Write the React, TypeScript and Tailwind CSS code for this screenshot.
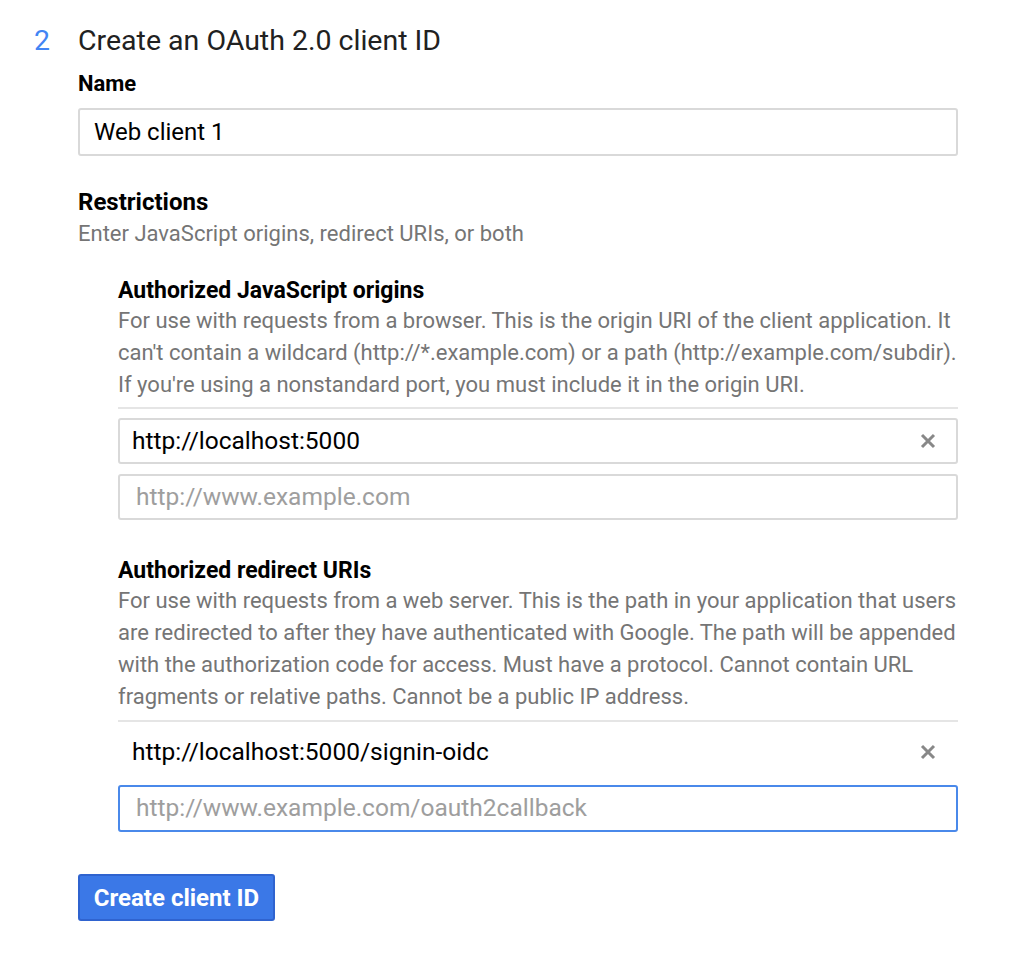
import React from "react";

function XIcon() {
  return (
    <svg width="16" height="16" viewBox="0 0 16 16" className="shrink-0">
      <path d="M2 2 L14 14 M14 2 L2 14" stroke="#888888" strokeWidth="3" strokeLinecap="butt" />
    </svg>
  );
}

export default function App() {
  return (
    <div
      className="w-full h-[958px] bg-white flex pl-[34px] pt-[23px]"
      style={{ fontFamily: "Roboto, 'Liberation Sans', sans-serif" }}
    >
      <div className="w-[44px] text-[28.5px] leading-[36px] text-[#4285f4]">2</div>
      <div className="w-[880px] flex flex-col">
        <h2 className="text-[28.5px] leading-[36px] text-[#212121]">Create an OAuth 2.0 client ID</h2>
        <div className="mt-[11px] text-[22px] leading-[28px] font-bold text-black">Name</div>
        <div className="mt-[10px] h-[48px] border-2 border-[#d9d9d9] rounded-[3px] flex items-center pl-[14px] text-[24px] text-black">
          Web client 1
        </div>
        <div className="mt-[32px] text-[24px] leading-[28px] font-bold text-black">Restrictions</div>
        <div className="mt-[2px] text-[22px] leading-[32px] text-[#757575]">
          Enter JavaScript origins, redirect URIs, or both
        </div>
        <div className="pl-[40px] flex flex-col">
          <div className="mt-[27px] text-[23px] leading-[28px] font-bold text-black">
            Authorized JavaScript origins
          </div>
          <p className="text-[22px] leading-[32px] text-[#757575]">
            For use with requests from a browser. This is the origin URI of the client application. It
            can't contain a wildcard (http://*.example.com) or a path (http://example.com/subdir).
            If you're using a nonstandard port, you must include it in the origin URI.
          </p>
          <div className="mt-[6px] h-[2px] bg-[#e5e5e5]" />
          <div className="mt-[9px] h-[46px] border-2 border-[#d9d9d9] rounded-[3px] flex items-center justify-between pl-[12px] pr-[20px] text-[24.5px] text-black">
            <span>http://localhost:5000</span>
            <XIcon />
          </div>
          <div className="mt-[10px] h-[46px] border-2 border-[#d9d9d9] rounded-[3px] flex items-center pl-[16px] text-[24.5px] text-[#9e9e9e]">
            http://www.example.com
          </div>
          <div className="mt-[37px] text-[23px] leading-[28px] font-bold text-black">
            Authorized redirect URIs
          </div>
          <p className="text-[22px] leading-[32px] text-[#757575]">
            For use with requests from a web server. This is the path in your application that users
            are redirected to after they have authenticated with Google. The path will be appended
            with the authorization code for access. Must have a protocol. Cannot contain URL
            fragments or relative paths. Cannot be a public IP address.
          </p>
          <div className="mt-[7px] h-[2px] bg-[#e5e5e5]" />
          <div className="mt-[7px] h-[46px] flex items-center justify-between pl-[14px] pr-[22px] text-[24.5px] text-black">
            <span>http://localhost:5000/signin-oidc</span>
            <XIcon />
          </div>
          <div className="mt-[10px] h-[47px] border-2 border-[#4a89ea] rounded-[3px] flex items-center pl-[16px] text-[24.5px] text-[#9e9e9e]">
            http://www.example.com/oauth2callback
          </div>
        </div>
        <div className="mt-[42px]">
          <button className="h-[47px] w-[197px] rounded-[3px] border-2 border-[#2f63cf] bg-[#3b78e7] text-white text-[24px] font-bold">
            Create client ID
          </button>
        </div>
      </div>
    </div>
  );
}
